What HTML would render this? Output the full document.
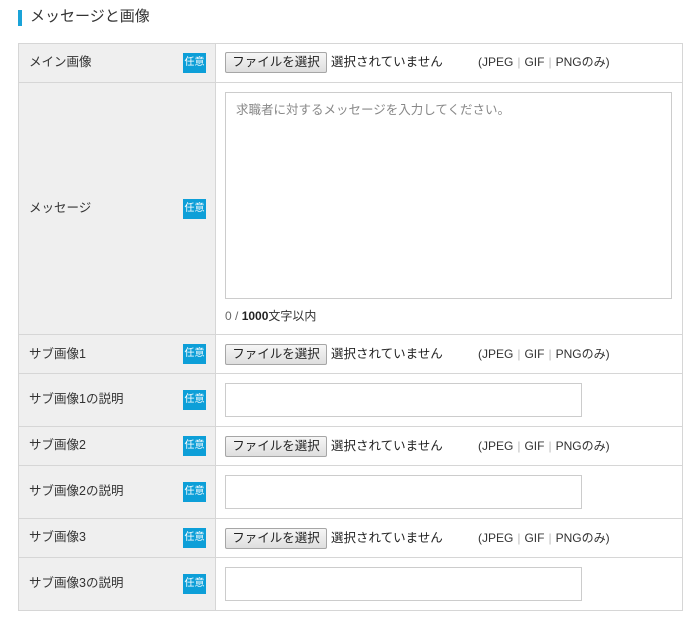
<!DOCTYPE html>
<html><head><meta charset="utf-8"><style>
*{box-sizing:border-box;margin:0;padding:0}
body{width:700px;height:620px;background:#fff;font-family:"Liberation Sans","Noto Sans CJK JP",sans-serif;color:#333;position:relative;overflow:hidden;line-height:16px}
.h{position:absolute;left:18px;top:8px;font-size:15px;color:#333;padding-left:12px;line-height:18px}
.h:before{content:"";position:absolute;left:0;top:2px;width:4px;height:16px;background:#1aa3d8}
.tbl{position:absolute;left:18px;top:43px;width:665px;height:568px;border:1px solid #d6d6d6;background:#fff}
.lab{position:absolute;left:0;width:197px;background:#efefef;border-right:1px solid #d6d6d6}
.line{position:absolute;left:0;width:663px;height:1px;background:#d6d6d6}
.lt{position:absolute;left:10px;font-size:12.5px;color:#333;line-height:16px}
.bd{position:absolute;left:164px;width:23px;height:20px;background:#0d9fd8;color:#fff;font-size:10px;line-height:12px;display:flex;align-items:center;justify-content:center}
.btn{position:absolute;left:206px;width:102px;height:21px;border:1px solid #a6a6a6;border-radius:2px;background:linear-gradient(#f6f6f6,#dedede);font-size:12.5px;line-height:19px;text-align:center;color:#222}
.ns{position:absolute;left:312px;font-size:12.5px;color:#222;line-height:16px}
.fmt{position:absolute;left:459px;font-size:12px;color:#333;line-height:16px}
.fmt i{font-style:normal;color:#bbb;margin:0 4px}
.inp{position:absolute;left:206px;width:357px;height:34px;border:1px solid #ccc;background:#fff}
</style></head><body>
<div class="h">メッセージと画像</div>
<div class="tbl">
<div class="lab" style="top:0;height:566px"></div>
<div class="line" style="top:38px"></div>
<div class="line" style="top:290px"></div>
<div class="line" style="top:329px"></div>
<div class="line" style="top:382px"></div>
<div class="line" style="top:421px"></div>
<div class="line" style="top:474px"></div>
<div class="line" style="top:513px"></div>

<div class="lt" style="top:10px">メイン画像</div><div class="bd" style="top:9px">任意</div>
<div class="btn" style="top:8px">ファイルを選択</div><div class="ns" style="top:10px">選択されていません</div>
<div class="fmt" style="top:10px">(JPEG<i>|</i>GIF<i>|</i>PNGのみ)</div>

<div class="lt" style="top:156px">メッセージ</div><div class="bd" style="top:155px">任意</div>
<div style="position:absolute;left:206px;top:48px;width:447px;height:207px;border:1px solid #ccc;padding:9px 10px;font-size:12.5px;color:#888;line-height:16px">求職者に対するメッセージを入力してください。</div>
<div style="position:absolute;left:206px;top:264px;font-size:12px;color:#666;line-height:16px">0 / <b style="color:#222">1000</b><span style="color:#333">文字以内</span></div>

<div class="lt" style="top:302px">サブ画像1</div><div class="bd" style="top:300px">任意</div>
<div class="btn" style="top:300px">ファイルを選択</div><div class="ns" style="top:302px">選択されていません</div>
<div class="fmt" style="top:302px">(JPEG<i>|</i>GIF<i>|</i>PNGのみ)</div>

<div class="lt" style="top:347px">サブ画像1の説明</div><div class="bd" style="top:346px">任意</div>
<div class="inp" style="top:339px"></div>

<div class="lt" style="top:393px">サブ画像2</div><div class="bd" style="top:392px">任意</div>
<div class="btn" style="top:392px">ファイルを選択</div><div class="ns" style="top:394px">選択されていません</div>
<div class="fmt" style="top:394px">(JPEG<i>|</i>GIF<i>|</i>PNGのみ)</div>

<div class="lt" style="top:439px">サブ画像2の説明</div><div class="bd" style="top:438px">任意</div>
<div class="inp" style="top:431px"></div>

<div class="lt" style="top:485px">サブ画像3</div><div class="bd" style="top:484px">任意</div>
<div class="btn" style="top:484px">ファイルを選択</div><div class="ns" style="top:486px">選択されていません</div>
<div class="fmt" style="top:486px">(JPEG<i>|</i>GIF<i>|</i>PNGのみ)</div>

<div class="lt" style="top:531px">サブ画像3の説明</div><div class="bd" style="top:530px">任意</div>
<div class="inp" style="top:523px"></div>
</div>
</body></html>
